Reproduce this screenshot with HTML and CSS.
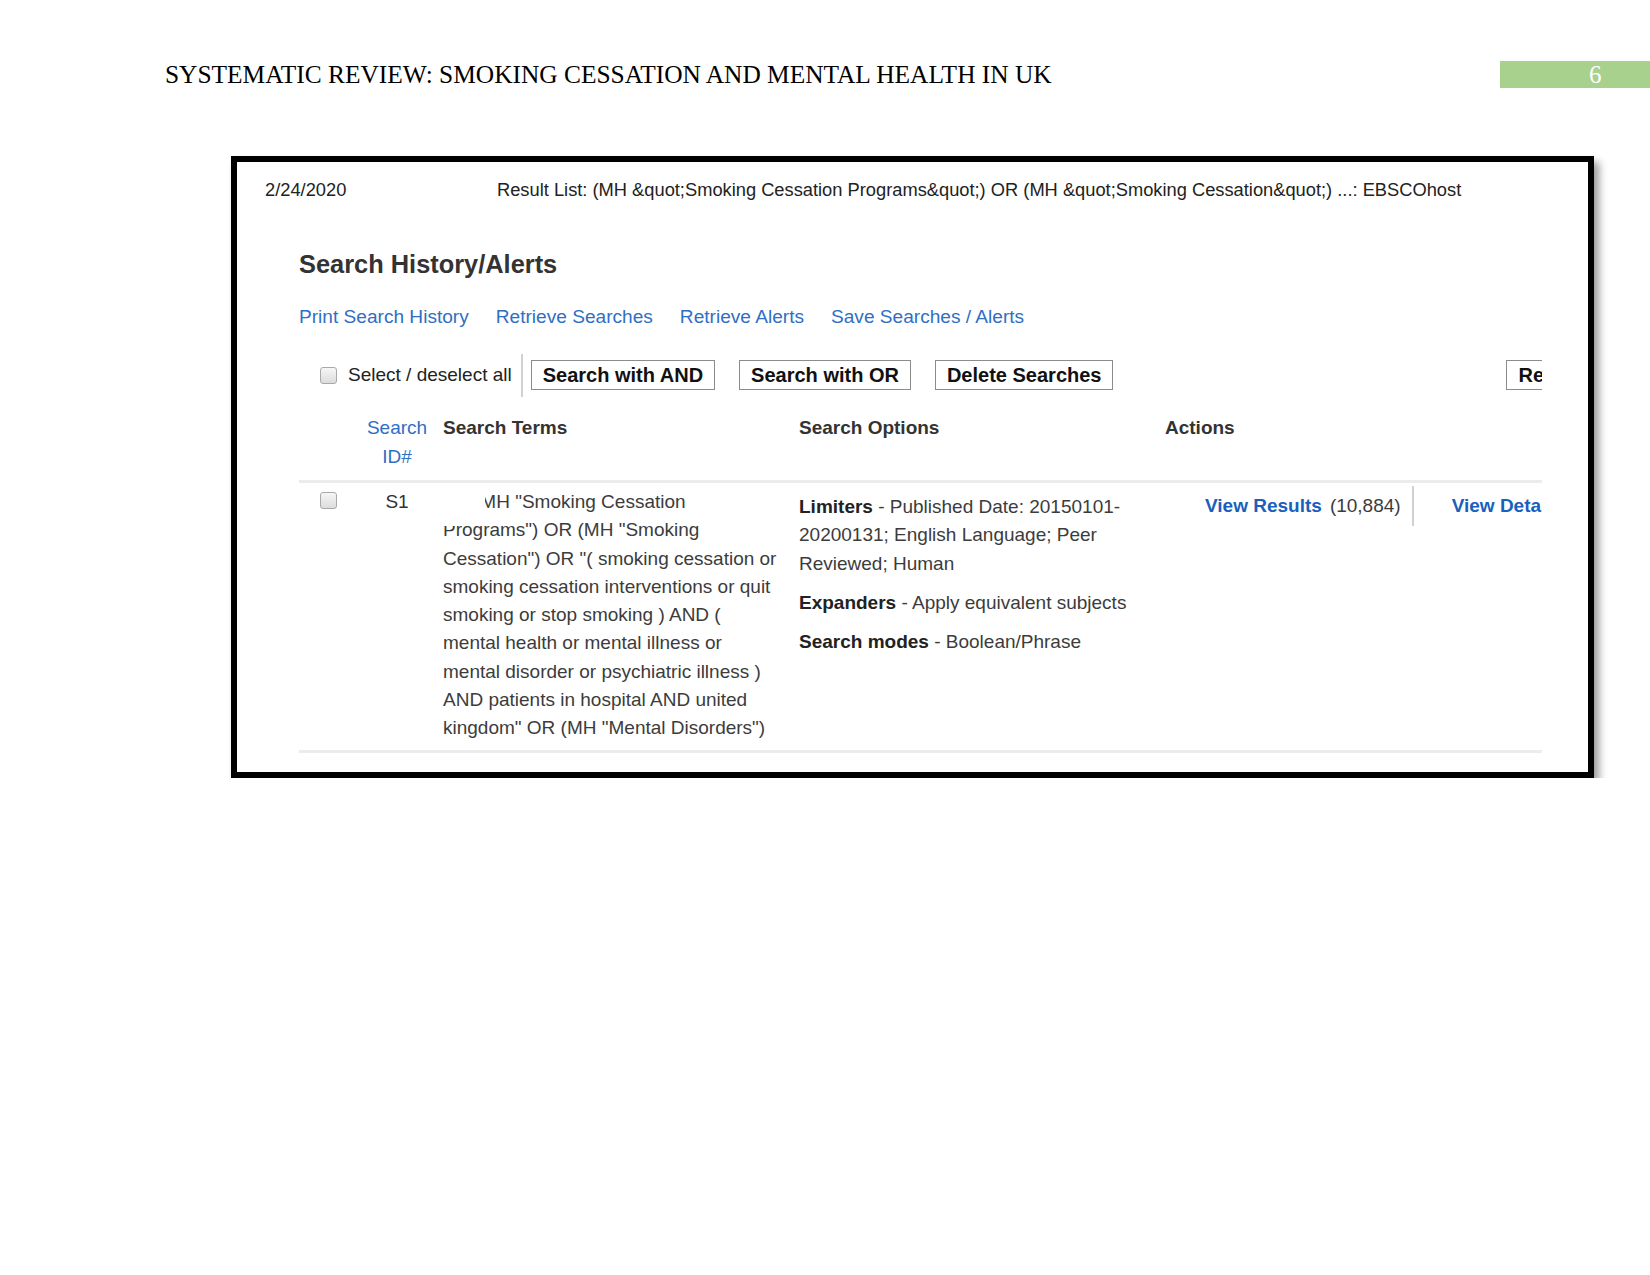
FILE: index.html
```html
<!DOCTYPE html>
<html lang="en">
<head>
<meta charset="utf-8">
<title>Systematic Review - Search History</title>
<link rel="stylesheet" href="styles.css">
</head>
<body>
<header class="doc-header">
  <div class="doc-title">SYSTEMATIC REVIEW: SMOKING CESSATION AND MENTAL HEALTH IN UK</div>
  <div class="page-num">6</div>
</header>

<section class="shot">
  <div class="print-head">
    <span class="print-date">2/24/2020</span>
    <span class="print-title">Result List: (MH &amp;quot;Smoking Cessation Programs&amp;quot;) OR (MH &amp;quot;Smoking Cessation&amp;quot;) ...: EBSCOhost</span>
  </div>

  <div class="panel">
    <h2 class="panel-title">Search History/Alerts</h2>
    <nav class="links">
      <a>Print Search History</a>
      <a>Retrieve Searches</a>
      <a>Retrieve Alerts</a>
      <a>Save Searches / Alerts</a>
    </nav>

    <div class="toolbar">
      <span class="select-all"><span class="cb"></span>Select / deselect all</span>
      <span class="vsep"></span>
      <button class="btn btn-first">Search with AND</button>
      <button class="btn">Search with OR</button>
      <button class="btn">Delete Searches</button>
      <button class="btn btn-refresh">Refresh Search Results</button>
    </div>

    <div class="grid thead">
      <div class="c-check"></div>
      <div class="c-id">Search<br>ID#</div>
      <div class="c-terms th">Search Terms</div>
      <div class="c-opts th">Search Options</div>
      <div class="c-act th">Actions</div>
    </div>

    <div class="grid trow">
      <div class="c-check"><span class="cb cb-row"></span></div>
      <div class="c-id">S1</div>
      <div class="c-terms terms">
        <span class="mask"></span>
        (MH "Smoking Cessation Programs") OR (MH "Smoking Cessation") OR "( smoking cessation or smoking cessation interventions or quit smoking or stop smoking ) AND ( mental health or mental illness or mental disorder or psychiatric illness ) AND patients in hospital AND united kingdom" OR (MH "Mental Disorders")
      </div>
      <div class="c-opts opts">
        <p><b>Limiters</b> - Published Date: 20150101-20200131; English Language; Peer Reviewed; Human</p>
        <p><b>Expanders</b> - Apply equivalent subjects</p>
        <p><b>Search modes</b> - Boolean/Phrase</p>
      </div>
      <div class="c-act actions">
        <a class="strong-link">View Results</a>
        <span class="count">(10,884)</span>
        <span class="asep"></span>
        <a class="strong-link details">View Details</a>
      </div>
    </div>
  </div>
</section>
</body>
</html>
```

FILE: styles.css
```css
* { box-sizing: border-box; }

body {
  margin: 0;
  background: #ffffff;
  font-family: "Liberation Sans", Arial, sans-serif;
  color: #3c3c3c;
}

.doc-header {
  display: flex;
  align-items: center;
  margin-top: 61px;
  height: 27px;
}

.doc-title {
  margin-left: 165px;
  font-family: "Liberation Serif", "Times New Roman", serif;
  font-size: 25.4px;
  color: #000;
  white-space: nowrap;
}

.page-num {
  margin-left: auto;
  width: 150px;
  height: 27px;
  background: #a9d18e;
  color: #ffffff;
  font-family: "Liberation Serif", "Times New Roman", serif;
  font-size: 25px;
  line-height: 27px;
  padding-left: 89px;
}

.shot {
  margin: 68px 0 0 231px;
  width: 1363px;
  height: 622px;
  border: 6px solid #000;
  background: #fff;
  box-shadow: 5px 6px 8px rgba(0, 0, 0, 0.4);
}

.print-head {
  display: flex;
  padding: 17px 0 0 28px;
  font-size: 18.3px;
  line-height: 22px;
  color: #222;
  white-space: nowrap;
}

.print-date { width: 232px; flex-shrink: 0; }

.panel {
  margin-left: 62px;
  width: 1243px;
  overflow: hidden;
}

.panel-title {
  margin: 48px 0 0;
  font-size: 25.4px;
  line-height: 30px;
  font-weight: bold;
  color: #333;
}

.links {
  display: flex;
  gap: 27px;
  margin-top: 27px;
  font-size: 19.1px;
  line-height: 22px;
}

.links a { color: #2f6fc4; white-space: nowrap; }

.toolbar {
  display: flex;
  align-items: center;
  margin-top: 25px;
  height: 44px;
  white-space: nowrap;
}

.toolbar > * { flex-shrink: 0; }

.select-all {
  display: flex;
  align-items: center;
  margin-left: 21px;
  font-size: 19px;
  color: #222;
}

.cb {
  display: inline-block;
  width: 17px;
  height: 17px;
  border: 1px solid #a9a9a9;
  border-radius: 3px;
  background: linear-gradient(#f6f6f6, #dcdcdc);
  margin-right: 11px;
  flex-shrink: 0;
}

.vsep {
  width: 2px;
  height: 43px;
  background: #d0d0d0;
  margin-left: 9px;
}

.btn {
  height: 30px;
  margin-left: 24px;
  padding: 0 11px;
  border: 1px solid #8c8c8c;
  background: #fff;
  font-family: "Liberation Sans", Arial, sans-serif;
  font-weight: bold;
  font-size: 20px;
  line-height: 28px;
  color: #111;
}

.btn-first { margin-left: 8px; }
.btn-refresh { margin-left: 393px; }

.grid {
  display: grid;
  grid-template-columns: 61px 74px 356px 366px 386px;
}

.thead {
  margin-top: 16px;
  padding-bottom: 9px;
  border-bottom: 3px solid #ececec;
  font-size: 19px;
  line-height: 29px;
}

.thead .c-id { color: #2f6fc4; text-align: center; }
.th { font-weight: bold; color: #333; }

.c-terms { padding: 0 9px; }
.c-opts { padding-left: 9px; }
.c-act { padding-left: 9px; }

.trow {
  padding: 5px 0 7px;
  border-bottom: 3px solid #ececec;
  font-size: 19px;
  line-height: 28.3px;
}

.trow .c-check { padding-left: 21px; }
.cb-row { margin-top: 4px; }
.trow .c-id { text-align: center; color: #333; }

.terms {
  position: relative;
  text-indent: 31px;
  padding-right: 8px;
}

.mask {
  position: absolute;
  left: 0;
  top: 0;
  width: 51px;
  height: 38px;
  background: #fff;
}

.opts { padding-top: 5px; }
.opts p { margin: 0 0 11px; }
.opts b { color: #222; }

.actions {
  display: flex;
  align-items: center;
  align-self: start;
  height: 40px;
  margin-top: -2px;
  padding-left: 49px;
  white-space: nowrap;
}

.actions > * { flex-shrink: 0; }

.strong-link { color: #1a5fbd; font-weight: bold; }
.count { margin-left: 8px; color: #3c3c3c; }

.asep {
  width: 2px;
  height: 40px;
  background: #d0d0d0;
  margin-left: 11px;
}

.details { margin-left: 38px; }
```
